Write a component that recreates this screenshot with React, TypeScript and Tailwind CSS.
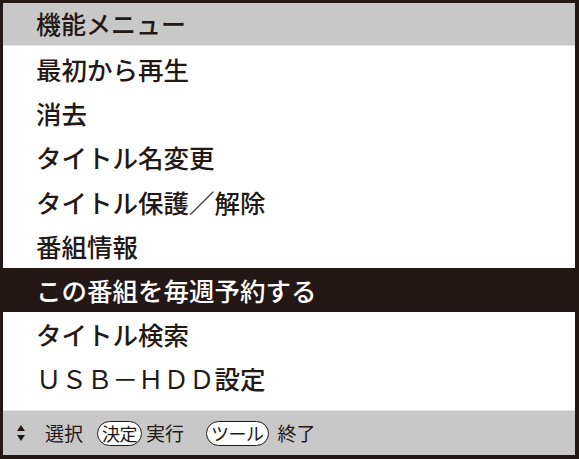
const items = [
  "最初から再生",
  "消去",
  "タイトル名変更",
  "タイトル保護／解除",
  "番組情報",
  "この番組を毎週予約する",
  "タイトル検索",
];

const selected = 5;

function Pill({ children }: { children: string }) {
  return (
    <span className="flex h-[25px] items-center rounded-full border-[1.5px] border-[#231815] bg-white px-[4px] text-[18px] leading-none tracking-[-0.5px]">
      {children}
    </span>
  );
}

export default function App() {
  return (
    <div
      className="h-[459px] w-[579px] bg-white text-[#231815]"
      style={{ fontFamily: '"Noto Sans CJK JP", "Noto Sans", sans-serif' }}
    >
      <div className="flex h-full flex-col border-[3px] border-r-[4px] border-b-[4px] border-[#231815]">
        <div className="flex h-[43px] items-center border-b border-[#e4e4e4] bg-[#c8c8c8] pl-[33px] text-[25px] font-medium">
          機能メニュー
        </div>
        <div className="flex flex-col pt-[1px] text-[25.5px] font-medium">
          {items.map((label, i) => (
            <div
              key={label}
              className={
                i === selected
                  ? "flex h-[44.2px] items-center bg-[#231815] pl-[33px] text-white"
                  : "flex h-[44.2px] items-center pl-[33px]"
              }
            >
              {label}
            </div>
          ))}
          <div className="flex h-[44.2px] items-center pl-[33px]">
            <span className="font-normal">ＵＳＢ－ＨＤＤ</span>
            <span>設定</span>
          </div>
        </div>
        <div className="flex-1" />
        <div className="flex h-[45px] items-center border-t border-[#e4e4e4] bg-[#c8c8c8] pl-[13px] text-[19px]">
          <svg className="h-[22px] w-[10px]" viewBox="0 0 10 22" fill="#231815">
            <path d="M5 3 L9 9 L1 9 Z" />
            <path d="M1 13 L9 13 L5 19 Z" />
          </svg>
          <span className="ml-[19px]">選択</span>
          <span className="ml-[14px]">
            <Pill>決定</Pill>
          </span>
          <span className="ml-[4px]">実行</span>
          <span className="ml-[22px]">
            <Pill>ツール</Pill>
          </span>
          <span className="ml-[9px]">終了</span>
        </div>
      </div>
    </div>
  );
}
